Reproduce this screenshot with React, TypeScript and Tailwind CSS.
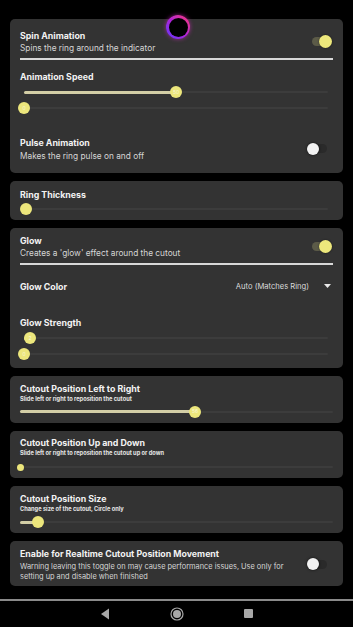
import React from "react";

const FONT = { fontFamily: "Inter, 'Noto Sans', sans-serif" };

function Toggle({ on }: { on: boolean }) {
  if (on) {
    return (
      <div className="relative w-[20px] h-[13px] shrink-0 mr-[1.5px]">
        <div className="absolute left-0 top-[2px] w-[18px] h-[9px] rounded-full bg-[#5c5b48]" />
        <div className="absolute right-0 top-0 w-[13px] h-[13px] rounded-full bg-[#ede87c] shadow-[0_0_2px_rgba(0,0,0,0.6)]" />
      </div>
    );
  }
  return (
    <div className="relative w-[20px] h-[12px] shrink-0 mr-[6px]">
      <div className="absolute right-0 top-[1.5px] w-[18px] h-[9px] rounded-full bg-[#2a2a2a]" />
      <div className="absolute left-0 top-0 w-[12px] h-[12px] rounded-full bg-[#f2f2f2] shadow-[0_0_3px_rgba(0,0,0,0.7)]" />
    </div>
  );
}

function Slider({
  frac,
  label,
  className,
  small,
  active = true,
}: {
  frac: number;
  label?: string;
  className?: string;
  small?: boolean;
  active?: boolean;
}) {
  const size = small ? 7 : 12;
  return (
    <div className={"relative h-[12px] " + (className ?? "")}>
      <div className="absolute left-0 right-0 top-[5px] h-[2px] rounded-full bg-[#3c3c3c]" />
      {active && (
        <div
          className="absolute left-0 top-[4.5px] h-[3px] rounded-full bg-[#d3cea6]"
          style={{ width: `${frac * 100}%` }}
        />
      )}
      <div
        className="absolute flex items-center justify-center rounded-full bg-[#ece67c] text-[5px] leading-none text-[#f8f6d8]"
        style={{
          width: size,
          height: size,
          left: `calc(${frac * 100}% - ${size / 2}px)`,
          top: (12 - size) / 2,
        }}
      >
        {label}
      </div>
    </div>
  );
}

function Card({ children, className }: { children: React.ReactNode; className?: string }) {
  return (
    <div className={"rounded-[5px] bg-[#333333] px-[10px] flex flex-col " + (className ?? "")}>
      {children}
    </div>
  );
}

const TITLE = "text-[8.8px] leading-[13px] font-bold";
const SUB = "text-[8.3px] leading-[11px] text-[#d6d6d6]";
const SMALL = "text-[5.7px] leading-[8px] font-bold text-[#e6e6e6]";

export default function App() {
  return (
    <div className="relative w-[353px] h-[627px] bg-black overflow-hidden flex flex-col text-[#f2f2f2]" style={FONT}>
      <div className="flex flex-col gap-[8px] px-[10px] pt-[19px]">
        {/* Card 1 */}
        <Card className="pt-[9.5px] pb-[11.5px]">
          <div className="flex items-center justify-between">
            <div className="flex flex-col">
              <div className={TITLE}>Spin Animation</div>
              <div className={"mt-[1px] " + SUB}>Spins the ring around the indicator</div>
            </div>
            <Toggle on />
          </div>
          <div className="mt-[4.5px] h-[2px] bg-[#d8d8d8]" />
          <div className={"mt-[9.5px] " + TITLE}>Animation Speed</div>
          <Slider className="mt-[3.5px] ml-[4px] mr-[5px]" frac={0.5} label="50" />
          <Slider className="mt-[4px] ml-[4px] mr-[5px]" frac={0} label="0" />
          <div className="mt-[21.5px] flex items-center justify-between">
            <div className="flex flex-col">
              <div className={TITLE}>Pulse Animation</div>
              <div className={"mt-[2px] " + SUB}>Makes the ring pulse on and off</div>
            </div>
            <Toggle on={false} />
          </div>
        </Card>

        {/* Card 2 */}
        <Card className="pt-[6.5px] pb-[5px]">
          <div className={TITLE}>Ring Thickness</div>
          <Slider className="mt-[2.5px] ml-[4px] mr-[5px]" frac={0.007} />
        </Card>

        {/* Card 3 */}
        <Card className="pt-[5.5px] pb-[8px]">
          <div className="flex items-center justify-between">
            <div className="flex flex-col">
              <div className={TITLE}>Glow</div>
              <div className={"mt-[1px] " + SUB}>Creates a 'glow' effect around the cutout</div>
            </div>
            <Toggle on />
          </div>
          <div className="mt-[4.5px] h-[2px] bg-[#d8d8d8]" />
          <div className="mt-[14.5px] flex items-center justify-between">
            <div className={TITLE}>Glow Color</div>
            <div className="flex items-center">
              <span className="text-[7.6px] leading-[13px] text-[#dadada]">Auto (Matches Ring)</span>
              <svg width="7" height="4" viewBox="0 0 7 4" className="ml-[15px] mr-[2px]">
                <path d="M0 0 L7 0 L3.5 4 Z" fill="#e8e8e8" />
              </svg>
            </div>
          </div>
          <div className={"mt-[23px] " + TITLE}>Glow Strength</div>
          <Slider className="mt-[3.5px] ml-[4px] mr-[5px]" frac={0.02} label="2" />
          <Slider className="mt-[4px] ml-[4px] mr-[5px]" frac={0} label="0" />
        </Card>

        {/* Card 4 */}
        <Card className="pt-[5.5px] pb-[5px]">
          <div className={TITLE}>Cutout Position Left to Right</div>
          <div className={SMALL}>Slide left or right to reposition the cutout</div>
          <Slider className="mt-[3px]" frac={0.559} label="56" />
        </Card>

        {/* Card 5 */}
        <Card className="pt-[5.5px] pb-[5px]">
          <div className={TITLE}>Cutout Position Up and Down</div>
          <div className={SMALL}>Slide left or right to reposition the cutout up or down</div>
          <Slider className="mt-[4px]" frac={0} small active={false} />
        </Card>

        {/* Card 6 */}
        <Card className="pt-[5.5px] pb-[5px]">
          <div className={TITLE}>Cutout Position Size</div>
          <div className={"mt-[0.5px] " + SMALL}>Change size of the cutout, Circle only</div>
          <Slider className="mt-[3px]" frac={0.0575} />
        </Card>

        {/* Card 7 */}
        <Card className="pt-[5.5px] pb-[4px]">
          <div className="flex items-center justify-between">
            <div className="flex flex-col">
              <div className={TITLE}>Enable for Realtime Cutout Position Movement</div>
              <div className="mt-[2.5px] whitespace-nowrap text-[7.4px] leading-[10px] text-[#d6d6d6]">
                Warning leaving this toggle on may cause performance issues, Use only for
                <br />
                setting up and disable when finished
              </div>
            </div>
            <Toggle on={false} />
          </div>
        </Card>
      </div>

      {/* Nav bar */}
      <div className="mt-[13px] h-[2px] bg-[#8a8a8a]" />
      <div className="flex items-center justify-center h-[28px] gap-[60px]">
        <svg width="10" height="12" viewBox="0 0 10 12">
          <path d="M9 0.5 L9 11.5 L1 6 Z" fill="#a8a8a8" />
        </svg>
        <svg width="14" height="14" viewBox="0 0 14 14">
          <circle cx="7" cy="7" r="6" fill="none" stroke="#a8a8a8" strokeWidth="1.2" />
          <circle cx="7" cy="7" r="4" fill="#a8a8a8" />
        </svg>
        <div className="w-[9px] h-[9px] rounded-[1px] bg-[#a8a8a8]" />
      </div>

      {/* Top ring indicator */}
      <div className="absolute left-[166px] top-[15px] w-[24px] h-[24px] rounded-full p-[2.5px] bg-linear-to-tr from-[#5a2cff] via-[#b21ed6] to-[#ff1f6e] shadow-[0_0_4px_rgba(200,40,180,0.7)]">
        <div className="w-full h-full rounded-full bg-black" />
      </div>
    </div>
  );
}
